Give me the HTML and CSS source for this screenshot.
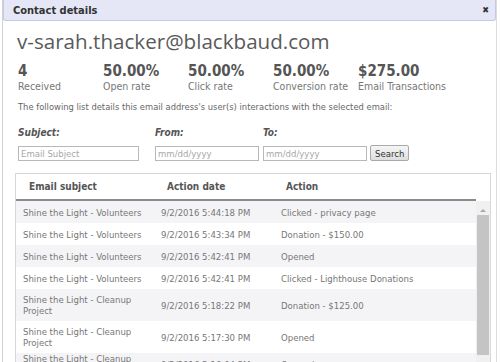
FILE: index.html
```html
<!DOCTYPE html>
<html lang="en">
<head>
    <meta charset="UTF-8">
    <title>Contact details</title>
    <link rel="stylesheet" href="styles.css">
</head>
<body>
    <div class="dialog">
        <div class="titlebar">
            <span class="title">Contact details</span>
            <span class="close">&#10006;</span>
        </div>

        <div class="content">
            <h1 class="email">v-sarah.thacker@blackbaud.com</h1>

            <div class="stats">
                <div class="stat"><div class="value">4</div><div class="label">Received</div></div>
                <div class="stat"><div class="value">50.00%</div><div class="label">Open rate</div></div>
                <div class="stat"><div class="value">50.00%</div><div class="label">Click rate</div></div>
                <div class="stat"><div class="value">50.00%</div><div class="label">Conversion rate</div></div>
                <div class="stat"><div class="value">$275.00</div><div class="label">Email Transactions</div></div>
            </div>

            <p class="intro">The following list details this email address's user(s) interactions with the selected email:</p>

            <div class="filters">
                <div class="field subject">
                    <label>Subject:</label>
                    <input type="text" placeholder="Email Subject">
                </div>
                <div class="field from">
                    <label>From:</label>
                    <input type="text" placeholder="mm/dd/yyyy">
                </div>
                <div class="field to">
                    <label>To:</label>
                    <div class="inline">
                        <input type="text" placeholder="mm/dd/yyyy">
                        <button class="search">Search</button>
                    </div>
                </div>
            </div>

            <div class="grid">
                <div class="grid-head">
                    <div class="c1">Email subject</div>
                    <div class="c2">Action date</div>
                    <div class="c3">Action</div>
                </div>
                <div class="grid-body">
                    <div class="rows">
                        <div class="row"><div class="c1">Shine the Light - Volunteers</div><div class="c2">9/2/2016 5:44:18 PM</div><div class="c3">Clicked - privacy page</div></div>
                        <div class="row"><div class="c1">Shine the Light - Volunteers</div><div class="c2">9/2/2016 5:43:34 PM</div><div class="c3">Donation - $150.00</div></div>
                        <div class="row"><div class="c1">Shine the Light - Volunteers</div><div class="c2">9/2/2016 5:42:41 PM</div><div class="c3">Opened</div></div>
                        <div class="row"><div class="c1">Shine the Light - Volunteers</div><div class="c2">9/2/2016 5:42:41 PM</div><div class="c3">Clicked - Lighthouse Donations</div></div>
                        <div class="row tall"><div class="c1">Shine the Light - Cleanup Project</div><div class="c2">9/2/2016 5:18:22 PM</div><div class="c3">Donation - $125.00</div></div>
                        <div class="row tall"><div class="c1">Shine the Light - Cleanup Project</div><div class="c2">9/2/2016 5:17:30 PM</div><div class="c3">Opened</div></div>
                        <div class="row"><div class="c1">Shine the Light - Cleanup Project</div><div class="c2">9/2/2016 5:16:04 PM</div><div class="c3">Opened</div></div>
                    </div>
                    <div class="scrollbar">
                        <div class="arrow"></div>
                        <div class="thumb"></div>
                    </div>
                </div>
            </div>
        </div>
    </div>
</body>
</html>
```

FILE: styles.css
```css
* { box-sizing: border-box; }

body {
    margin: 0;
    background: #ffffff;
    font-family: "DejaVu Sans Condensed", "DejaVu Sans", sans-serif;
    color: #666;
    overflow: hidden;
}

.dialog {
    margin: 0 3px 0 2px;
    height: 362px;
    border-left: 1px solid #cfcfd4;
    border-right: 1px solid #dcdce0;
}

.titlebar {
    height: 21px;
    display: flex;
    align-items: center;
    justify-content: space-between;
    padding: 0 6px 0 9px;
    background: #e5e7f6;
    border: 1px solid #c6c9df;
    border-top: none;
    border-radius: 0 0 3px 3px;
}

.title {
    font-size: 11px;
    font-weight: bold;
    color: #333;
}

.close {
    font-size: 9px;
    color: #333;
}

.content {
    padding: 0 7px 0 12px;
}

.email {
    margin: 5px 0 0 2px;
    font-family: "Open Sans", sans-serif;
    font-weight: normal;
    font-size: 20.6px;
    color: #5a5a5a;
    line-height: 30px;
}

.stats {
    display: flex;
    margin: 7px 0 0 3px;
}

.stat {
    width: 85px;
    white-space: nowrap;
}

.value {
    font-size: 15px;
    font-weight: bold;
    color: #555;
    line-height: 16px;
}

.label {
    font-size: 10.5px;
    color: #777;
    line-height: 14px;
}

.intro {
    margin: 8px 0 0 3px;
    font-size: 9.3px;
    line-height: 12px;
    color: #666;
}

.filters {
    display: flex;
    margin: 14px 0 0 3px;
}

.field label {
    display: block;
    font-size: 10px;
    line-height: 12px;
    font-weight: bold;
    font-style: italic;
    color: #555;
    margin-bottom: 7px;
}

.field input {
    display: block;
    height: 15px;
    border: 1px solid #b8b8b8;
    font-family: inherit;
    font-size: 9.5px;
    padding: 0 2px;
    color: #555;
}

.field input::placeholder {
    color: #a8a8a8;
}

.subject input { width: 121px; }
.subject { margin-right: 16px; }
.from input { width: 104px; }
.from { margin-right: 4px; }
.to input { width: 104px; }

.inline {
    display: flex;
    align-items: center;
    gap: 3px;
}

.search {
    height: 16px;
    margin-top: -1px;
    padding: 0 4px;
    font-family: inherit;
    font-size: 9.5px;
    color: #333;
    background: linear-gradient(#f6f6f6, #dedede);
    border: 1px solid #a9a9a9;
    border-radius: 2px;
}

.grid {
    margin-top: 12px;
    border: 1px solid #d8d8d8;
    width: 476px;
    height: 200px;
    overflow: hidden;
}

.grid-head {
    display: flex;
    height: 27px;
    align-items: center;
    border-bottom: 2px solid #8a8a8a;
    margin-right: 14px;
    font-size: 10px;
    font-weight: bold;
    color: #555;
}

.grid-head .c1 { padding-left: 13px; }
.grid-head .c2 { padding-left: 6px; }
.grid-head .c3 { padding-left: 5px; }

.grid-body {
    display: flex;
}

.rows {
    flex: 1;
}

.row {
    display: flex;
    align-items: center;
    height: 22px;
    font-size: 9.5px;
    color: #777;
}

.row:nth-child(odd) {
    background: #f4f4f6;
}

.row.tall {
    height: 32px;
}

.c1 {
    width: 145px;
    padding-left: 7px;
}

.c2 { width: 120px; }
.c3 { flex: 1; }

.scrollbar {
    width: 14px;
    background: #f0f0f0;
}

.arrow {
    height: 14px;
    position: relative;
}

.arrow::after {
    content: "";
    position: absolute;
    left: 4px;
    top: 5px;
    border: 3px solid transparent;
    border-bottom-color: #a8a8a8;
}

.thumb {
    margin: 0 1px;
    height: 140px;
    background: #c4c4c4;
}
```
